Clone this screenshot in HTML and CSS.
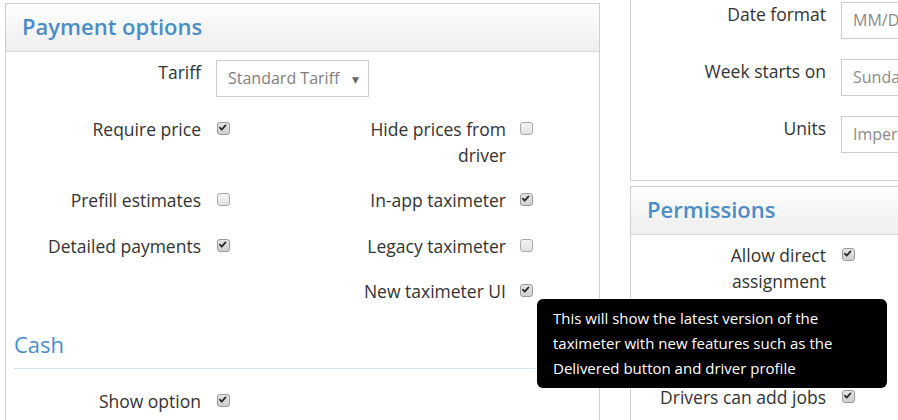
FILE: index.html
```html
<!DOCTYPE html>
<html>
<head>
<meta charset="utf-8">
<link rel="stylesheet" href="styles.css">
</head>
<body>
<div class="page">
  <section class="panel panel-left">
    <header class="panel-head"><h2 class="panel-title">Payment options</h2></header>
    <div class="panel-body">
      <div class="row row-wide">
        <span class="lbl lbl-select">Tariff</span>
        <div class="select">Standard Tariff<span class="caret">▼</span></div>
      </div>
      <div class="row">
        <span class="lbl">Require price</span>
        <span class="ctl"><span class="cb on"><svg viewBox="0 0 13 13"><path d="M3.2 6.6 5.4 8.9 9.9 3.8"/></svg></span></span>
        <span class="lbl lbl2">Hide prices from driver</span>
        <span class="ctl ctl2"><span class="cb"></span></span>
      </div>
      <div class="row">
        <span class="lbl">Prefill estimates</span>
        <span class="ctl"><span class="cb"></span></span>
        <span class="lbl lbl2">In-app taximeter</span>
        <span class="ctl ctl2"><span class="cb on"><svg viewBox="0 0 13 13"><path d="M3.2 6.6 5.4 8.9 9.9 3.8"/></svg></span></span>
      </div>
      <div class="row">
        <span class="lbl">Detailed payments</span>
        <span class="ctl"><span class="cb on"><svg viewBox="0 0 13 13"><path d="M3.2 6.6 5.4 8.9 9.9 3.8"/></svg></span></span>
        <span class="lbl lbl2">Legacy taximeter</span>
        <span class="ctl ctl2"><span class="cb"></span></span>
      </div>
      <div class="row">
        <span class="lbl"></span>
        <span class="ctl"></span>
        <span class="lbl lbl2">New taximeter UI</span>
        <span class="ctl ctl2 tip-anchor"><span class="cb on"><svg viewBox="0 0 13 13"><path d="M3.2 6.6 5.4 8.9 9.9 3.8"/></svg></span>
          <div class="tooltip">This will show the latest version of the taximeter with new features such as the Delivered button and driver profile</div>
        </span>
      </div>
      <h3 class="legend">Cash</h3>
      <div class="row">
        <span class="lbl">Show option</span>
        <span class="ctl"><span class="cb on"><svg viewBox="0 0 13 13"><path d="M3.2 6.6 5.4 8.9 9.9 3.8"/></svg></span></span>
      </div>
    </div>
  </section>

  <div class="col-right">
    <section class="panel panel-cut">
      <div class="panel-body body-cut">
        <div class="rrow">
          <span class="rlbl lbl-select">Date format</span>
          <div class="input">MM/DD/YYYY</div>
        </div>
        <div class="rrow">
          <span class="rlbl lbl-select">Week starts on</span>
          <div class="input">Sunday</div>
        </div>
        <div class="rrow">
          <span class="rlbl lbl-select">Units</span>
          <div class="input">Imperial</div>
        </div>
      </div>
    </section>
    <section class="panel panel-perm">
      <header class="panel-head"><h2 class="panel-title">Permissions</h2></header>
      <div class="panel-body body-right">
        <div class="rrow">
          <span class="rlbl">Allow direct assignment</span>
          <span class="ctl"><span class="cb on"><svg viewBox="0 0 13 13"><path d="M3.2 6.6 5.4 8.9 9.9 3.8"/></svg></span></span>
        </div>
        <div class="rrow rrow-hidden"></div>
        <div class="rrow">
          <span class="rlbl">Drivers can add jobs</span>
          <span class="ctl"><span class="cb on"><svg viewBox="0 0 13 13"><path d="M3.2 6.6 5.4 8.9 9.9 3.8"/></svg></span></span>
        </div>
      </div>
    </section>
  </div>
</div>
</body>
</html>
```

FILE: styles.css
```css
html, body {
  margin: 0;
  padding: 0;
  background: #fff;
  overflow: hidden;
}
body {
  width: 898px;
  height: 420px;
  font-family: "Open Sans", "DejaVu Sans", sans-serif;
  font-size: 17.5px;
  line-height: 25.5px;
  color: #333;
}
.page {
  display: flex;
  align-items: flex-start;
  gap: 30px;
  padding-left: 5px;
}
.panel {
  border: 1px solid #cfcfcf;
  background: #fff;
  box-sizing: border-box;
}
.panel-left {
  width: 595px;
  margin-top: 3px;
  flex: none;
}
.panel-head {
  box-sizing: border-box;
  display: flex;
  align-items: center;
  padding: 0 16px 3px;
  background: linear-gradient(#fefefe, #eeeeee);
  border-bottom: 1px solid #d8d8d8;
  height: 48px;
}
.panel-title {
  margin: 0;
  font-size: 22px;
  font-weight: 600;
  line-height: 26px;
  color: #4a8dc8;
}
.panel-body {
  padding: 8px 9px 7px 8px;
}
.row {
  display: grid;
  grid-template-columns: 202px 115px 189px 1fr;
  margin-bottom: 20px;
}
.row-wide {
  grid-template-columns: 202px 1fr;
}
.lbl {
  text-align: right;
  padding-right: 15px;
}
.lbl2 {
  padding-right: 14px;
}
.lbl-select {
  padding-top: 0;
}
.ctl {
  display: block;
  padding-top: 5px;
}
.ctl > .cb {
  margin-left: 1px;
}
.ctl2 > .cb {
  margin-left: 0;
}
.cb {
  display: block;
  width: 13px;
  height: 13px;
  box-sizing: border-box;
  border: 1px solid #a9a9a9;
  border-radius: 3px;
  background: linear-gradient(#f4f4f4, #e0e0e0);
}
.cb.on {
  background: linear-gradient(#e6e6e6, #cfcfcf);
  border-color: #9a9a9a;
}
.cb svg {
  display: block;
  width: 11px;
  height: 11px;
}
.cb svg path {
  fill: none;
  stroke: #2b2b2b;
  stroke-width: 2.1;
  stroke-linecap: round;
  stroke-linejoin: round;
  transform: translate(-1px, -1px);
}
.select {
  width: 153px;
  height: 37px;
  box-sizing: border-box;
  border: 1px solid #cccccc;
  padding: 5px 0 0 11px;
  color: #808080;
  font-size: 16px;
  display: flex;
  align-items: flex-start;
  background: #fff;
}
.caret {
  margin-left: auto;
  margin-right: 9px;
  font-size: 9px;
  color: #666;
  line-height: 27px;
}
.legend {
  margin: 27px 0 20px;
  padding-bottom: 12px;
  border-bottom: 1px solid #d3e3f1;
  font-size: 22px;
  font-weight: 400;
  line-height: 24px;
  color: #4a8dc8;
}
.tip-anchor {
  position: relative;
}
.tooltip {
  position: absolute;
  left: 17px;
  top: 20px;
  z-index: 5;
  width: 350px;
  box-sizing: border-box;
  padding: 7px 16px;
  background: #000;
  color: #fff;
  font-size: 15px;
  line-height: 25px;
  border-radius: 6px;
}
.col-right {
  width: 320px;
  flex: none;
}
.panel-cut {
  border-top: none;
}
.body-cut {
  padding: 2px 0 7px 0;
}
.body-right {
  padding: 8px 0 7px 0;
}
.panel-perm {
  margin-top: 5px;
}
.rrow {
  display: grid;
  grid-template-columns: 210px 1fr;
  margin-bottom: 20px;
}
.rrow-hidden {
  height: 51px;
}
.rlbl {
  text-align: right;
  padding: 0 15px 0 20px;
}
.rlbl.lbl-select {
  padding-top: 0;
}
.input {
  height: 37px;
  box-sizing: border-box;
  border: 1px solid #cccccc;
  padding: 5px 0 0 11px;
  font-size: 16px;
  color: #8a8a8a;
  white-space: nowrap;
  overflow: hidden;
}
.rrow .ctl > .cb {
  margin-left: 1px;
}
```
